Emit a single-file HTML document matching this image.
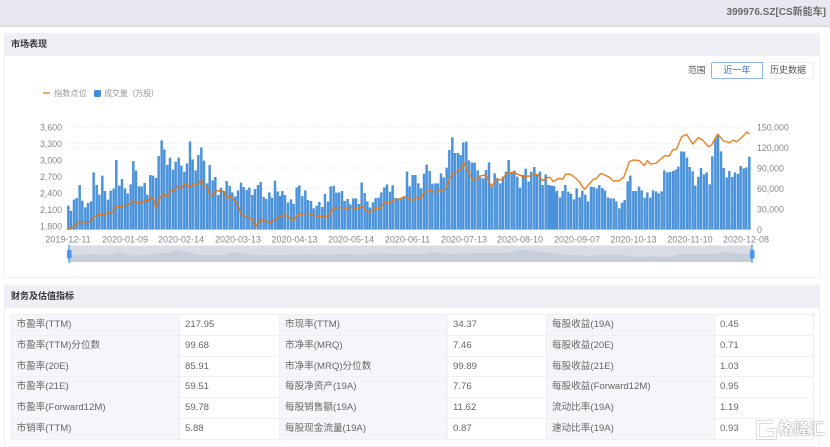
<!DOCTYPE html>
<html lang="zh"><head><meta charset="utf-8"><title>399976.SZ</title>
<style>
html,body{margin:0;padding:0;background:#fff}
body{width:830px;height:447px;overflow:hidden;position:relative;font-family:"Liberation Sans","Noto Sans CJK SC",sans-serif;color:#666;filter:blur(.3px)}
.a{position:absolute;white-space:nowrap}
.top{left:0;top:0;width:830px;height:25px;background:#e7e8f0;border-bottom:2px solid #d8dfe9}
.panel{position:absolute;left:4px;width:816px;background:#fff;border:1px solid #f1f1f4;box-sizing:border-box}
.head{height:21.5px;background:#eff0f5;font-size:9px;font-weight:bold;color:#333;line-height:21.5px;padding-left:6px}
.grid{position:absolute;left:10.5px;top:314px;width:803px;height:126px;display:grid;grid-template-columns:168.5px 100px 168px 99px 168px 99px;grid-template-rows:repeat(6,20.83px);font-size:9.6px;line-height:20.8px;border-top:1px solid #eef0f4;border-left:1px solid #eef0f4;box-sizing:border-box}
.grid div{box-sizing:border-box;padding-left:5px;border-bottom:1px solid #eef0f4;border-right:1px solid #eef0f4;white-space:nowrap;overflow:hidden}
.grid .l{background:#f6f6fa}
.btn{box-sizing:border-box;height:17px;line-height:15px;text-align:center;font-size:9px}
svg{position:absolute;left:0;top:0}
svg text{font-family:"Liberation Sans","Noto Sans CJK SC",sans-serif;font-size:8.8px;fill:#888}
</style></head><body>
<div class="a top"></div>
<div class="a" style="right:4px;top:6px;font-size:10px;font-weight:bold;color:#6b6b6b;line-height:14px">399976.SZ[CS新能车]</div>

<div class="panel" style="top:33px;height:245px"><div class="head">市场表现</div></div>
<div class="panel" style="top:285px;height:162px"><div class="head">财务及估值指标</div></div>

<div class="a" style="left:688px;top:64px;font-size:8.8px;line-height:13px;color:#555">范围</div>
<div class="a btn" style="left:711px;top:62px;width:52px;border:1px solid #8fb6f2;color:#3b70d8;border-radius:2px 0 0 2px;z-index:1">近一年</div>
<div class="a btn" style="left:762px;top:62px;width:52px;border:1px solid #eceef2;color:#555;border-radius:0 2px 2px 0">历史数据</div>

<div class="a" style="left:43px;top:92px;width:7px;height:2px;background:#f4a660"></div>
<div class="a" style="left:54px;top:87.5px;font-size:8.2px;line-height:12px;color:#999">指数点位</div>
<div class="a" style="left:94px;top:89.5px;width:7px;height:7px;border-radius:1.5px;background:#3f8fd8"></div>
<div class="a" style="left:104px;top:87.5px;font-size:8.2px;line-height:12px;color:#999;letter-spacing:-.4px">成交量（万股）</div>

<svg width="830" height="447" viewBox="0 0 830 447">
<g stroke="#e4e6ea" stroke-width=".8" stroke-dasharray="1.5 1.5">
<path d="M67 127H751M67 143.7H751M67 147.5H751M67 168H751M67 188.5H751M67 209H751"/>
</g>
<path d="M67 229.5H751" stroke="#c9ced6" stroke-width=".8"/>

<!-- bars -->
<g transform="translate(0,120) scale(.33333)" stroke="#4a92da" stroke-width="7.4" fill="none">
<path d="M205 328V257M213 328V273M222 328V239M230 328V234M239 328V195M247 328V242M256 328V262M264 328V249M273 328V244M281 328V157M290 328V195M298 328V224M307 328V167M315 328V213M324 328V239M332 328V212M341 328V206M349 328V120M358 328V197M366 328V177M375 328V205M383 328V220M392 328V193M400 328V123M408 328V152M417 328V199M425 328V199M434 328V189M442 328V224M451 328V165M459 328V167M468 328V174M476 328V108M485 328V61M493 328V88M502 328V135M510 328V113M519 328V149M527 328V125M536 328V113M544 328V137M553 328V155M561 328V130M570 328V64M578 328V118M587 328V151M595 328V105M604 328V82M612 328V122M621 328V190M629 328V135M638 328V181M646 328V171M655 328V225M663 328V203M672 328V215M680 328V183M689 328V198M697 328V217M706 328V229M714 328V211M723 328V188M731 328V201M740 328V210M748 328V203M757 328V225M765 328V207M774 328V195M782 328V186M791 328V231M799 328V237M808 328V217M816 328V233M825 328V182M833 328V214"/>
</g>
<g transform="translate(280,120) scale(.33333)" stroke="#4a92da" stroke-width="7.4" fill="none">
<path d="M0 328V228M7 328V213M15 328V225M24 328V247M33 328V238M41 328V252M50 328V202M58 328V196M67 328V228M76 328V211M84 328V240M93 328V243M101 328V265M110 328V257M118 328V246M127 328V261M135 328V222M144 328V245M152 328V199M161 328V198M169 328V218M177 328V217M186 328V213M194 328V243M203 328V237M211 328V253M220 328V235M228 328V235M237 328V252M245 328V187M254 328V219M262 328V244M270 328V262M279 328V247M287 328V234M296 328V233M304 328V217M313 328V202M321 328V193M330 328V215M338 328V196M347 328V234M355 328V238M364 328V237M372 328V230M381 328V155M389 328V199M398 328V165M406 328V165M415 328V190M423 328V205M432 328V161M440 328V134M449 328V153M457 328V191M466 328V190M474 328V190M483 328V160M491 328V172M500 328V143M508 328V90M517 328V52M525 328V99M534 328V99M542 328V105M550 328V67M559 328V65M567 328V121M576 328V128M584 328V128M593 328V151M601 328V172M610 328V175M618 328V150M627 328V127M635 328V200M644 328V160M652 328V175M661 328V190M669 328V170M678 328V155M686 328V120M695 328V158M703 328V152M712 328V170M720 328V203M729 328V165M737 328V146M746 328V185M754 328V155M763 328V141M771 328V165M780 328V155M788 328V195M797 328V163M805 328V195M814 328V197M822 328V198M831 328V212"/>
</g>
<g transform="translate(550,120) scale(.33333)" stroke="#4a92da" stroke-width="7.4" fill="none">
<path d="M0 328V197M10 328V199M18 328V217M30 328V232M38 328V213M46 328V195M55 328V215M63 328V222M72 328V238M80 328V205M89 328V232M97 328V212M106 328V224M114 328V244M123 328V200M131 328V201M140 328V206M148 328V195M157 328V204M165 328V211M174 328V232M182 328V235M191 328V235M199 328V244M208 328V265M216 328V248M224 328V240M233 328V184M241 328V167M250 328V213M258 328V213M267 328V200M275 328V211M284 328V234M292 328V217M301 328V233M309 328V211M318 328V214M326 328V220M335 328V214M343 328V151M352 328V157M360 328V156M369 328V153M377 328V149M385 328V140M394 328V94M402 328V95M411 328V113M419 328V141M428 328V154M436 328V197M445 328V171M453 328V144M462 328V163M470 328V157M479 328V193M487 328V109M496 328V55M504 328V46M513 328V94M521 328V144M530 328V172M538 328V153M547 328V171M555 328V157M564 328V162M572 328V138M581 328V145M589 328V142M598 328V110"/>
</g>

<!-- line -->
<g fill="none" stroke="#ee8427" stroke-width="4.4" stroke-linejoin="round" stroke-linecap="round">
<polyline transform="translate(0,120) scale(.33333)" stroke="#d9761f" points="205,328 213,326 222,318 238,305 256,306 272,305 282,290 295,284 310,285 320,280 340,274 350,260 365,260 385,254 398,243 410,248 425,249 435,241 445,244 452,231 460,238 468,264 478,235 492,221 502,231 512,213 522,211 532,200 545,205 556,190 568,201 582,192 595,192 604,179 612,198 622,203 630,228 640,222 648,212 672,214 680,234 690,229 700,238 712,252 722,280 735,290 755,296 767,320 782,299 795,302 810,308 825,298 840,290"/>
<polyline transform="translate(280,120) scale(.33333)" stroke="#e07b22" points="0,290 12,284 25,290 40,302 52,284 85,280 95,285 115,289 145,288 160,265 180,262 195,265 215,262 230,267 245,258 255,268 268,279 282,265 300,265 313,249 330,248 340,240 360,236 375,230 397,241 407,231 420,236 437,214 450,212 465,216 480,210 495,209 510,175 522,158 540,150 552,128 562,150 578,180 590,177 600,168 618,165 634,200 650,177 665,180 680,160 700,157 730,170 750,168 765,161 775,165 788,182 802,173 810,172"/>
<polyline transform="translate(550,120) scale(.33333)" points="0,172 10,185 25,175 38,178 46,163 60,162 75,173 90,188 103,208 115,195 130,178 140,175 152,160 165,165 178,172 190,183 208,182 222,170 238,125 250,120 268,122 283,137 292,122 302,132 318,130 335,115 345,107 358,108 368,90 380,87 395,50 410,43 428,72 445,53 458,60 475,80 485,75 503,42 520,62 538,68 548,61 560,65 575,53 590,36 597,41"/>
</g>

<!-- axis labels -->
<g text-anchor="end">
<text x="62" y="130.5">3,600</text><text x="62" y="147">3,300</text><text x="62" y="163.5">3,000</text><text x="62" y="180">2,700</text><text x="62" y="196.5">2,400</text><text x="62" y="213">2,100</text><text x="62" y="229.5">1,800</text>
</g>
<g>
<text x="757" y="130.5">150,000</text><text x="757" y="151">120,000</text><text x="757" y="171.5">90,000</text><text x="757" y="192">60,000</text><text x="757" y="212.5">30,000</text><text x="757" y="233">0</text>
</g>
<g text-anchor="middle">
<text style="font-size:9px" x="68" y="242.5">2019-12-11</text><text style="font-size:9px" x="125" y="242.5">2020-01-09</text><text style="font-size:9px" x="181" y="242.5">2020-02-14</text><text style="font-size:9px" x="238" y="242.5">2020-03-13</text><text style="font-size:9px" x="294.5" y="242.5">2020-04-13</text><text style="font-size:9px" x="351" y="242.5">2020-05-14</text><text style="font-size:9px" x="407.5" y="242.5">2020-06-11</text><text style="font-size:9px" x="464" y="242.5">2020-07-13</text><text style="font-size:9px" x="520" y="242.5">2020-08-10</text><text style="font-size:9px" x="577" y="242.5">2020-09-07</text><text style="font-size:9px" x="633.5" y="242.5">2020-10-13</text><text style="font-size:9px" x="690" y="242.5">2020-11-10</text><text style="font-size:9px" x="746" y="242.5">2020-12-08</text>
</g>

<!-- slider -->
<rect x="69" y="245.5" width="683" height="16.5" fill="#d8dce5"/>
<path d="M69 262V256L80 255 92 254 100 255 110 255 117 252 124 254 135 256 150 254 158 253 170 253 177 250 186 252 200 255 215 255 225 255 234 252 245 254 260 255 276 255 290 255 305 254 320 255 340 254 352 254 362 255 372 253 392 254 408 254 424 254 430 252 450 254 472 253 495 253 508 253 520 250 528 250 540 252 552 253 565 255 578 255 590 256 600 255 617 254 630 256 640 257 650 256 660 257 668 257 680 254 700 254 716 254 726 252 740 254 752 253V262Z" fill="#c8ced9"/>
<path d="M69 244.5V263" stroke="#3d8ff0" stroke-width="1.2"/>
<path d="M752 244.5V263" stroke="#3d8ff0" stroke-width="1.2"/>
<rect x="67" y="250" width="4.6" height="8.5" rx="1" fill="#4b96ee"/>
<rect x="750" y="250" width="4.6" height="8.5" rx="1" fill="#4b96ee"/>
</svg>

<div class="grid">
<div class="l">市盈率(TTM)</div><div>217.95</div><div class="l">市现率(TTM)</div><div>34.37</div><div class="l">每股收益(19A)</div><div>0.45</div>
<div class="l">市盈率(TTM)分位数</div><div>99.68</div><div class="l">市净率(MRQ)</div><div>7.46</div><div class="l">每股收益(20E)</div><div>0.71</div>
<div class="l">市盈率(20E)</div><div>85.91</div><div class="l">市净率(MRQ)分位数</div><div>99.89</div><div class="l">每股收益(21E)</div><div>1.03</div>
<div class="l">市盈率(21E)</div><div>59.51</div><div class="l">每股净资产(19A)</div><div>7.76</div><div class="l">每股收益(Forward12M)</div><div>0.95</div>
<div class="l">市盈率(Forward12M)</div><div>59.78</div><div class="l">每股销售额(19A)</div><div>11.62</div><div class="l">流动比率(19A)</div><div>1.19</div>
<div class="l">市销率(TTM)</div><div>5.88</div><div class="l">每股现金流量(19A)</div><div>0.87</div><div class="l">速动比率(19A)</div><div>0.93</div>
</div>

<!-- watermark -->
<svg width="830" height="447" viewBox="0 0 830 447">
<path d="M773 422H758V438H775V430H767" fill="none" stroke="#bdbdbd" stroke-width="3.4" opacity=".8"/>
<path d="M773 422H758V438H775V430H767" fill="none" stroke="#fff" stroke-width="2.2"/>
</svg>
<div class="a" style="left:778px;top:421px;font-size:15.5px;line-height:18px;color:#fff;font-weight:bold;text-shadow:0 0 1.5px #888,0 0 1px #999">格隆汇</div>
</body></html>
